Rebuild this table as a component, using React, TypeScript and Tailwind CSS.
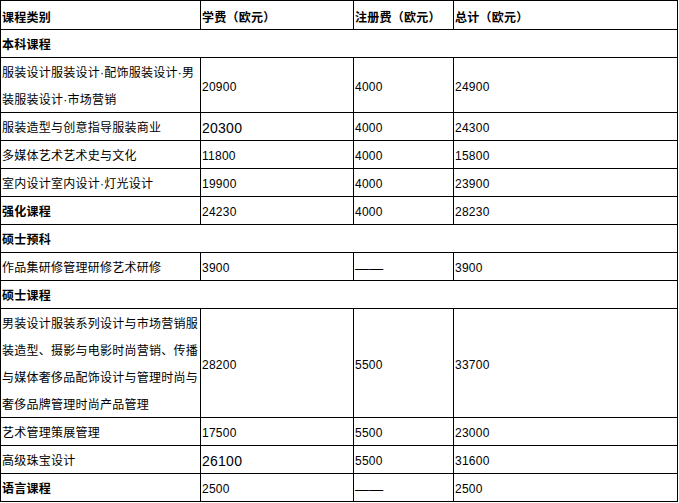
import React from "react";

type Row =
  | { kind: "section"; label: string }
  | {
      kind: "data";
      label: React.ReactNode;
      bold?: boolean;
      fee: string;
      feeBig?: boolean;
      reg: string;
      total: string;
    };

const rows: Row[] = [
  { kind: "section", label: "本科课程" },
  {
    kind: "data",
    label: (
      <>
        服装设计服装设计·配饰服装设计·男
        <br />
        装服装设计·市场营销
      </>
    ),
    fee: "20900",
    reg: "4000",
    total: "24900",
  },
  { kind: "data", label: "服装造型与创意指导服装商业", fee: "20300", feeBig: true, reg: "4000", total: "24300" },
  { kind: "data", label: "多媒体艺术艺术史与文化", fee: "11800", reg: "4000", total: "15800" },
  { kind: "data", label: "室内设计室内设计·灯光设计", fee: "19900", reg: "4000", total: "23900" },
  { kind: "data", label: "强化课程", bold: true, fee: "24230", reg: "4000", total: "28230" },
  { kind: "section", label: "硕士预科" },
  { kind: "data", label: "作品集研修管理研修艺术研修", fee: "3900", reg: "——", total: "3900" },
  { kind: "section", label: "硕士课程" },
  {
    kind: "data",
    label: (
      <>
        男装设计服装系列设计与市场营销服
        <br />
        装造型、摄影与电影时尚营销、传播
        <br />
        与媒体奢侈品配饰设计与管理时尚与
        <br />
        奢侈品牌管理时尚产品管理
      </>
    ),
    fee: "28200",
    reg: "5500",
    total: "33700",
  },
  { kind: "data", label: "艺术管理策展管理", fee: "17500", reg: "5500", total: "23000" },
  { kind: "data", label: "高级珠宝设计", fee: "26100", feeBig: true, reg: "5500", total: "31600" },
  { kind: "data", label: "语言课程", bold: true, fee: "2500", reg: "——", total: "2500" },
];

const cell =
  "h-[28px] border-r border-b border-black p-0 pl-[1px] align-middle text-left whitespace-nowrap overflow-hidden";

function T({ children }: { children: React.ReactNode }) {
  return <div className="translate-y-[2px]">{children}</div>;
}

function H({ children }: { children: React.ReactNode }) {
  return <div className="translate-y-[3px]">{children}</div>;
}

export default function App() {
  return (
    <div
      className="bg-white text-black text-[12px] tracking-[0.25px]"
      style={{ fontFamily: '"Liberation Sans", "Noto Sans CJK SC", sans-serif' }}
    >
      <table className="table-fixed border-separate border-spacing-0 border-l border-t border-black w-[678px]">
        <colgroup>
          <col className="w-[200px]" />
          <col className="w-[153px]" />
          <col className="w-[100px]" />
          <col className="w-[224px]" />
        </colgroup>
        <thead>
          <tr className="leading-[28px]">
            <th className={`${cell} h-[29px] font-bold`}>
              <H>课程类别</H>
            </th>
            <th className={`${cell} h-[29px] font-bold`}>
              <H>学费（欧元）</H>
            </th>
            <th className={`${cell} h-[29px] font-bold`}>
              <H>注册费（欧元）</H>
            </th>
            <th className={`${cell} h-[29px] font-bold`}>
              <H>总计（欧元）</H>
            </th>
          </tr>
        </thead>
        <tbody className="leading-[27px]">
          {rows.map((r, i) =>
            r.kind === "section" ? (
              <tr key={i}>
                <td colSpan={4} className={`${cell} font-bold`}>
                  <T>{r.label}</T>
                </td>
              </tr>
            ) : (
              <tr key={i}>
                <td className={`${cell} ${r.bold ? "font-bold" : ""}`}>
                  <T>{r.label}</T>
                </td>
                <td className={`${cell} ${r.feeBig ? "text-[14px]" : ""}`}>
                  <T>{r.fee}</T>
                </td>
                <td className={`${cell} ${r.reg === "——" ? "text-[14px]" : ""}`}>
                  <T>{r.reg}</T>
                </td>
                <td className={cell}>
                  <T>{r.total}</T>
                </td>
              </tr>
            )
          )}
        </tbody>
      </table>
    </div>
  );
}
